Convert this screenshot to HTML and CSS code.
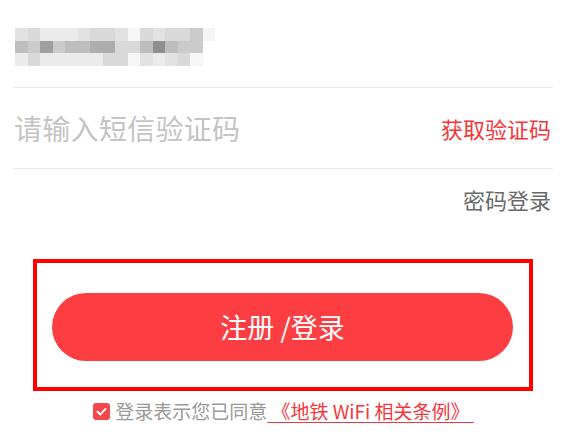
FILE: index.html
```html
<!DOCTYPE html>
<html lang="zh-CN">
<head>
<meta charset="utf-8">
<title>登录</title>
<link rel="stylesheet" href="styles.css">
</head>
<body>
<div class="page">
  <div class="row phone-row">
    <div class="mosaic" aria-label="手机号（已模糊）">
      <span class="s2"></span><span class="s3"></span><span class="s1"></span><span class="s1"></span><span class="s1"></span><span class="s2"></span><span class="s3"></span><span class="s3"></span><span class="s2"></span><span class="s0"></span><span class="s3"></span><span class="s2"></span><span class="s3"></span><span class="s3"></span><span class="s4"></span><span class="s0"></span>
      <span class="s5"></span><span class="s4"></span><span class="s7"></span><span class="s4"></span><span class="s5"></span><span class="s5"></span><span class="s6"></span><span class="s6"></span><span class="s3"></span><span class="s3"></span><span class="s5"></span><span class="s8"></span><span class="s5"></span><span class="s4"></span><span class="s4"></span><span class="s9"></span>
      <span class="s1"></span><span class="s3"></span><span class="s1"></span><span class="s1"></span><span class="s1"></span><span class="s1"></span><span class="s1"></span><span class="s3"></span><span class="s3"></span><span class="s0"></span><span class="s2"></span><span class="s1"></span><span class="s2"></span><span class="s3"></span><span class="s0"></span><span class="s9"></span>
    </div>
  </div>
  <div class="row code-row">
    <span class="placeholder">请输入短信验证码</span>
    <span class="get-code">获取验证码</span>
  </div>
  <div class="pwd-row">
    <span class="pwd-login">密码登录</span>
  </div>
  <div class="highlight">
    <button class="submit">注册 /登录</button>
  </div>
  <div class="agree">
    <span class="check">
      <svg width="17" height="17" viewBox="0 0 16 16"><path d="M4.2 8.2 L7 10.8 L11.8 5.6" fill="none" stroke="#fff" stroke-width="1.8" stroke-linecap="round" stroke-linejoin="round"/></svg>
    </span>
    <span class="agree-text">登录表示您已同意</span>
    <a class="agree-link">&nbsp;《地铁 WiFi 相关条例》&nbsp;</a>
  </div>
</div>
</body>
</html>
```
FILE: styles.css
```css
* { box-sizing: border-box; }
html, body {
  margin: 0;
  padding: 0;
  background: #ffffff;
}
body {
  font-family: "Noto Sans CJK SC", "Noto Sans", sans-serif;
  width: 569px;
  height: 439px;
  overflow: hidden;
}
.page {
  padding: 0 16px 0 13px;
}
.row {
  border-bottom: 1px solid #e8e8e8;
}
.phone-row {
  height: 88px;
  padding: 28px 0 0 2px;
}
.mosaic {
  display: grid;
  grid-template-columns: repeat(16, 12.5px);
  grid-template-rows: repeat(3, 12.5px);
  width: 200px;
}
.mosaic span { display: block; }
.s0 { background: #f6f6f6; }
.s1 { background: #ebebeb; }
.s2 { background: #e2e2e2; }
.s3 { background: #d9d9d9; }
.s4 { background: #cbcbcb; }
.s5 { background: #bebebe; }
.s6 { background: #adadad; }
.s7 { background: #a0a0a0; }
.s8 { background: #8f8f8f; }
.s9 { background: #ffffff; }
.code-row {
  height: 81px;
  display: flex;
  align-items: center;
  justify-content: space-between;
  padding-left: 1px;
}
.placeholder {
  font-size: 28px;
  color: #c4c4c4;
  line-height: 36px;
  letter-spacing: 0.3px;
}
.get-code {
  font-size: 22px;
  color: #f5363b;
  line-height: 30px;
  padding-right: 2px;
}
.pwd-row {
  display: flex;
  justify-content: flex-end;
  margin-top: 15px;
}
.pwd-login {
  font-size: 22px;
  line-height: 30px;
  color: #6a6a6a;
  padding-right: 2px;
}
.highlight {
  margin: 45px 20px 0 20px;
  border: 4px solid #ff0000;
  padding: 30px 16px 26px 15px;
}
.submit {
  display: block;
  width: 100%;
  height: 68px;
  border: none;
  border-radius: 34px;
  background: #fc3e42;
  color: #ffffff;
  font-family: "Noto Sans CJK SC", "Noto Sans", sans-serif;
  font-size: 27px;
  line-height: 68px;
  padding: 0;
}
.agree {
  margin-top: 8px;
  display: flex;
  justify-content: center;
  align-items: center;
  height: 24px;
  padding-left: 1px;
}
.check {
  width: 17px;
  height: 17px;
  border-radius: 3px;
  background: #f4484c;
  display: flex;
  margin-right: 5px;
}
.agree-text {
  font-size: 19px;
  line-height: 24px;
  color: #9a9a9a;
}
.agree-link {
  font-size: 19px;
  line-height: 24px;
  color: #f5363b;
  text-decoration: underline;
  text-underline-offset: 3px;
}
```
